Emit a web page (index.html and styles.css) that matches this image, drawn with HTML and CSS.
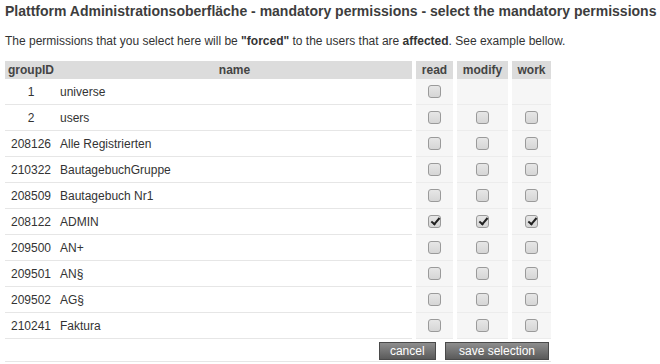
FILE: index.html
```html
<!DOCTYPE html>
<html lang="de">
<head>
    <meta charset="UTF-8">
    <meta name="viewport" content="width=device-width, initial-scale=1.0">
    <title>Plattform Administrationsoberfläche - mandatory permissions</title>
    <link rel="stylesheet" href="styles.css">
</head>
<body>

    <h1 class="title">Plattform Administrationsoberfläche - mandatory permissions - select the mandatory permissions</h1>
    <p class="intro">The permissions that you select here will be <b>"forced"</b> to the users that are <b>affected</b>. See example bellow.</p>

    <table class="perm-table">
        <thead>
            <tr>
                <th class="col-id">groupID</th>
                <th class="col-name">name</th>
                <th class="col-check col-read">read</th>
                <th class="col-check col-modify">modify</th>
                <th class="col-check col-work">work</th>
            </tr>
        </thead>
        <tbody>
            <tr>
                <td class="col-id">1</td>
                <td class="col-name">universe</td>
                <td class="col-check"><label class="cb"><input type="checkbox"><span></span></label></td>
                <td class="col-check"></td>
                <td class="col-check"></td>
            </tr>
            <tr>
                <td class="col-id">2</td>
                <td class="col-name">users</td>
                <td class="col-check"><label class="cb"><input type="checkbox"><span></span></label></td>
                <td class="col-check"><label class="cb"><input type="checkbox"><span></span></label></td>
                <td class="col-check"><label class="cb"><input type="checkbox"><span></span></label></td>
            </tr>
            <tr>
                <td class="col-id">208126</td>
                <td class="col-name">Alle Registrierten</td>
                <td class="col-check"><label class="cb"><input type="checkbox"><span></span></label></td>
                <td class="col-check"><label class="cb"><input type="checkbox"><span></span></label></td>
                <td class="col-check"><label class="cb"><input type="checkbox"><span></span></label></td>
            </tr>
            <tr>
                <td class="col-id">210322</td>
                <td class="col-name">BautagebuchGruppe</td>
                <td class="col-check"><label class="cb"><input type="checkbox"><span></span></label></td>
                <td class="col-check"><label class="cb"><input type="checkbox"><span></span></label></td>
                <td class="col-check"><label class="cb"><input type="checkbox"><span></span></label></td>
            </tr>
            <tr>
                <td class="col-id">208509</td>
                <td class="col-name">Bautagebuch Nr1</td>
                <td class="col-check"><label class="cb"><input type="checkbox"><span></span></label></td>
                <td class="col-check"><label class="cb"><input type="checkbox"><span></span></label></td>
                <td class="col-check"><label class="cb"><input type="checkbox"><span></span></label></td>
            </tr>
            <tr>
                <td class="col-id">208122</td>
                <td class="col-name">ADMIN</td>
                <td class="col-check"><label class="cb"><input type="checkbox" checked><span></span></label></td>
                <td class="col-check"><label class="cb"><input type="checkbox" checked><span></span></label></td>
                <td class="col-check"><label class="cb"><input type="checkbox" checked><span></span></label></td>
            </tr>
            <tr>
                <td class="col-id">209500</td>
                <td class="col-name">AN+</td>
                <td class="col-check"><label class="cb"><input type="checkbox"><span></span></label></td>
                <td class="col-check"><label class="cb"><input type="checkbox"><span></span></label></td>
                <td class="col-check"><label class="cb"><input type="checkbox"><span></span></label></td>
            </tr>
            <tr>
                <td class="col-id">209501</td>
                <td class="col-name">AN§</td>
                <td class="col-check"><label class="cb"><input type="checkbox"><span></span></label></td>
                <td class="col-check"><label class="cb"><input type="checkbox"><span></span></label></td>
                <td class="col-check"><label class="cb"><input type="checkbox"><span></span></label></td>
            </tr>
            <tr>
                <td class="col-id">209502</td>
                <td class="col-name">AG§</td>
                <td class="col-check"><label class="cb"><input type="checkbox"><span></span></label></td>
                <td class="col-check"><label class="cb"><input type="checkbox"><span></span></label></td>
                <td class="col-check"><label class="cb"><input type="checkbox"><span></span></label></td>
            </tr>
            <tr>
                <td class="col-id">210241</td>
                <td class="col-name">Faktura</td>
                <td class="col-check"><label class="cb"><input type="checkbox"><span></span></label></td>
                <td class="col-check"><label class="cb"><input type="checkbox"><span></span></label></td>
                <td class="col-check"><label class="cb"><input type="checkbox"><span></span></label></td>
            </tr>
        </tbody>
        <tfoot>
            <tr>
                <td class="actions" colspan="5">
                    <button class="btn btn-cancel">cancel</button>
                    <button class="btn btn-save">save selection</button>
                </td>
            </tr>
        </tfoot>
    </table>

</body>
</html>
```

FILE: styles.css
```css
/* basis */
body {
    margin: 0;
    padding: 2px 5px;
    font-family: "Liberation Sans", Arial, sans-serif;
    font-size: 12px;
    color: #333;
    background-color: #fff;
}

.title {
    margin: 0;
    font-size: 14px;
    line-height: 18px;
    font-weight: bold;
    color: #3d3d3d;
    white-space: nowrap;
}

.intro {
    margin: 13px 0 12px 0;
    line-height: 16px;
}

/* tabelle */
.perm-table {
    border-collapse: separate;
    border-spacing: 0;
}

.perm-table th {
    background-color: #dcdcdc;
    color: #444;
    font-weight: bold;
    line-height: 18px;
    padding: 0;
    text-align: center;
}

.perm-table td {
    height: 26px;
    padding: 0;
    box-shadow: inset 0 -1px 0 #e6e6e6;
    vertical-align: middle;
}

.col-id {
    width: 52px;
    text-align: center;
}

.perm-table td.col-name {
    padding-left: 3px;
}

.col-name {
    width: 352px;
}

.col-check {
    border-left: 4px solid #fff;
    text-align: center;
}

.perm-table td.col-check {
    background-color: #f6f6f6;
    box-shadow: inset 0 -1px 0 #ececec;
}

.col-read { width: 37px; }
.col-modify { width: 51px; }
.col-work { width: 39px; }

/* checkbox */
.cb {
    display: inline-block;
    vertical-align: middle;
    cursor: pointer;
}

.cb input {
    display: none;
}

.cb span {
    display: block;
    position: relative;
    width: 11px;
    height: 11px;
    border: 1px solid #9a9a9a;
    border-radius: 3px;
    background: linear-gradient(#e6e6e6, #d6d6d6);
    margin-top: -3px;
}

.cb input:checked + span::after {
    content: "";
    position: absolute;
    left: 4px;
    top: 0px;
    width: 3px;
    height: 7px;
    border: solid #222;
    border-width: 0 2px 2px 0;
    transform: rotate(40deg);
}

/* buttons */
.perm-table td.actions {
    height: 23px;
    background: #fff;
    text-align: right;
    padding-right: 2px;
    box-shadow: inset 0 -1px 0 #e6e6e6;
}

.btn {
    height: 18px;
    padding: 0 10px;
    margin-left: 6px;
    border: 1px solid #4a4a4a;
    background: linear-gradient(#8e8e8e, #5a5a5a);
    color: #fff;
    font-family: "Liberation Sans", Arial, sans-serif;
    font-size: 12px;
    line-height: 16px;
    cursor: pointer;
    vertical-align: middle;
}

.btn-save {
    padding: 0 13px;
}

.btn:hover {
    background: linear-gradient(#9a9a9a, #666);
}
```
